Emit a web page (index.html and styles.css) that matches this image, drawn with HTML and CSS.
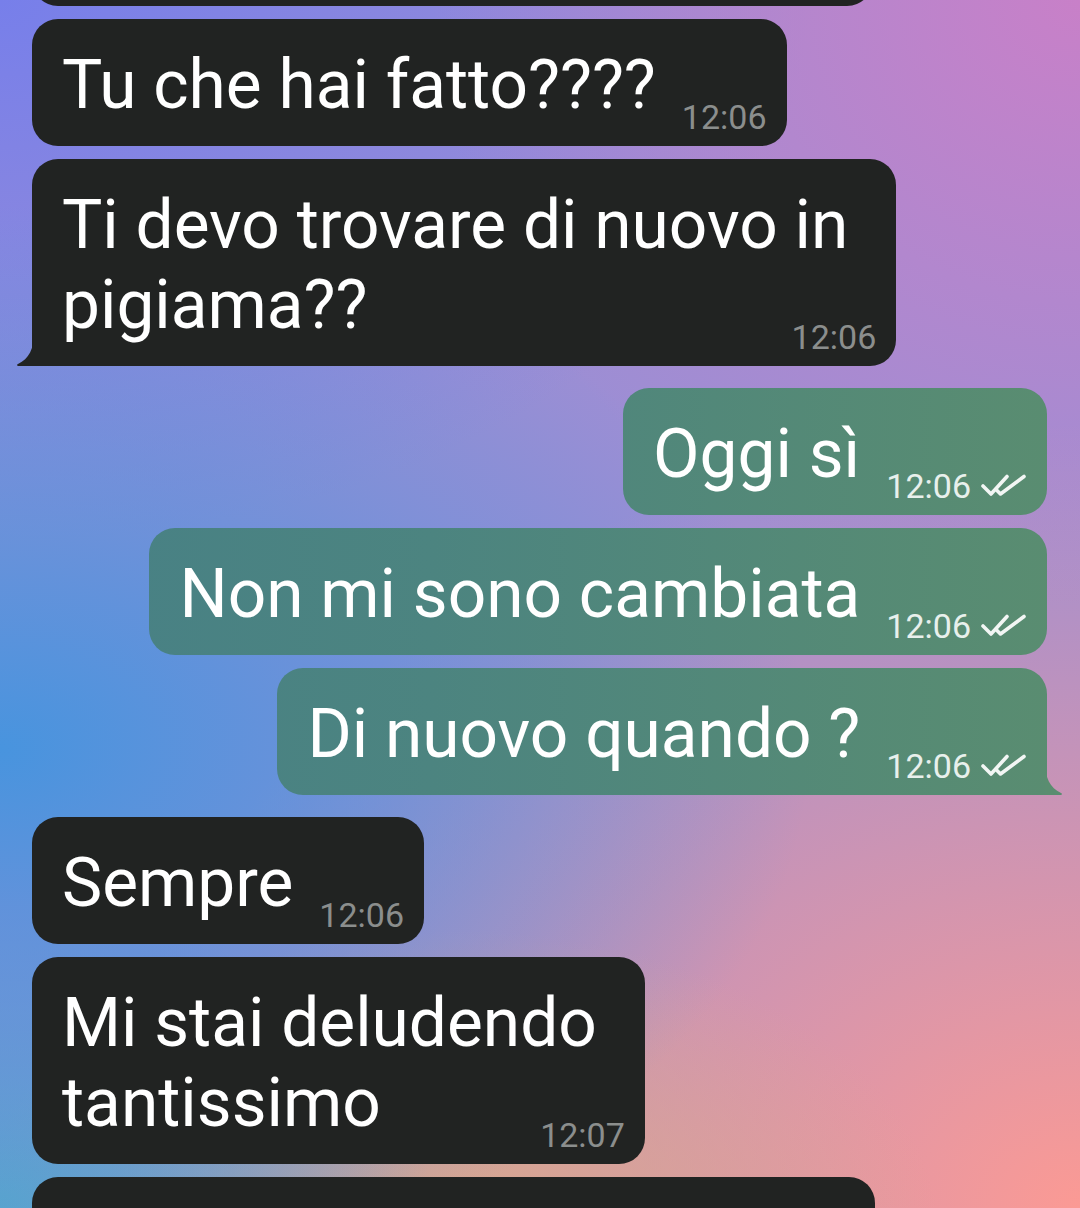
FILE: index.html
```html
<!DOCTYPE html>
<html lang="it">
<head>
  <meta charset="UTF-8">
  <meta name="viewport" content="width=device-width, initial-scale=1.0">
  <title>Chat</title>
  <link rel="stylesheet" href="styles.css">
</head>
<body>

  <div class="chat">

    <div class="row in">
      <div class="bubble">Sei ancora a letto?????<span class="meta">12:05</span></div>
    </div>

    <div class="row in">
      <div class="bubble">Tu che hai fatto????<span class="meta">12:06</span></div>
    </div>

    <div class="row in group-end">
      <div class="bubble wrap tail">Ti devo trovare di nuovo in<br>pigiama??<span class="meta">12:06</span>
        <svg class="tail-shape" width="18" height="32" viewBox="0 0 18 32"><path d="M18 0 C18 14 13 25 2 30 Q0 31 2 32 L18 32 Z"/></svg>
      </div>
    </div>

    <div class="row out">
      <div class="bubble">Oggi sì<span class="meta">12:06 <svg class="checks" width="46" height="24" viewBox="0 0 46 24"><path d="M2 12 L10 20 L26 2.5"/><path d="M16 16.5 L19.5 20 L43 2.5"/></svg></span></div>
    </div>

    <div class="row out">
      <div class="bubble">Non mi sono cambiata<span class="meta">12:06 <svg class="checks" width="46" height="24" viewBox="0 0 46 24"><path d="M2 12 L10 20 L26 2.5"/><path d="M16 16.5 L19.5 20 L43 2.5"/></svg></span></div>
    </div>

    <div class="row out group-end">
      <div class="bubble tail">Di nuovo quando ?<span class="meta">12:06 <svg class="checks" width="46" height="24" viewBox="0 0 46 24"><path d="M2 12 L10 20 L26 2.5"/><path d="M16 16.5 L19.5 20 L43 2.5"/></svg></span>
        <svg class="tail-shape" width="18" height="32" viewBox="0 0 18 32"><path d="M0 0 C0 14 5 25 16 30 Q18 31 16 32 L0 32 Z"/></svg>
      </div>
    </div>

    <div class="row in">
      <div class="bubble">Sempre<span class="meta">12:06</span></div>
    </div>

    <div class="row in">
      <div class="bubble wrap">Mi stai deludendo<br>tantissimo<span class="meta">12:07</span></div>
    </div>

    <div class="row in">
      <div class="bubble">Io non ti riconosco più!<span class="meta">12:07</span></div>
    </div>

  </div>

</body>
</html>
```

FILE: styles.css
```css
html, body {
  margin: 0;
  padding: 0;
  height: 1208px;
  overflow: hidden;
}

body {
  font-family: Roboto, "Noto Sans", sans-serif;
  color: #fff;
  background-color: #9c8ed4;
  background-image:
    radial-gradient(ellipse 75% 45% at 0% 62%, #4894de 0%, rgba(72, 148, 222, 0) 100%),
    radial-gradient(ellipse 40% 25% at 0% 100%, #5aa6cc 0%, rgba(90, 166, 204, 0) 100%),
    radial-gradient(ellipse 45% 25% at 42% 102%, #dcaa8a 0%, rgba(220, 170, 138, 0) 100%),
    radial-gradient(ellipse 90% 65% at 100% 100%, #fb9a94 0%, rgba(251, 154, 148, 0) 100%),
    radial-gradient(ellipse 60% 50% at 100% 0%, #c880c8 0%, rgba(200, 128, 200, 0) 100%),
    radial-gradient(ellipse 75% 45% at 0% 0%, #777fea 0%, rgba(119, 127, 234, 0) 100%);
}

.chat {
  display: flex;
  flex-direction: column;
  gap: 13px;
  margin-top: -121px;
  padding: 0 33px 0 32px;
}

.row {
  display: flex;
}

.row.in {
  justify-content: flex-start;
}

.row.out {
  justify-content: flex-end;
}

.row.group-end {
  margin-bottom: 9px;
}

.bubble {
  position: relative;
  max-width: 816px;
  padding: 26px 20px 11px 30px;
  border-radius: 26px;
  font-size: 67.6px;
  line-height: 80px;
  background: #212322;
}

/* wrapped messages keep some room on the right like the app does */
.bubble.wrap {
  padding-right: 48px;
}

.out .bubble {
  max-width: 900px;
  background: linear-gradient(to right, #478086 0%, #4c8480 40%, #5a8d70 100%);
  background-attachment: fixed;
}

.meta {
  float: right;
  margin: 54px 0 0 26px;
  font-size: 34px;
  line-height: 36px;
  color: #8b8e8d;
  display: flex;
  align-items: center;
  gap: 10px;
}

.wrap .meta {
  margin-right: -28px;
}

.out .meta {
  color: #e8f0ec;
}

.checks {
  fill: none;
  stroke: #f2f6f4;
  stroke-width: 3.6;
  stroke-linecap: round;
  stroke-linejoin: round;
}

.in .bubble.tail {
  border-bottom-left-radius: 0;
}

.out .bubble.tail {
  border-bottom-right-radius: 0;
}

.tail-shape {
  position: absolute;
  bottom: 0;
}

.in .tail-shape {
  left: -16px;
  fill: #212322;
}

.out .tail-shape {
  right: -16px;
  fill: #5a8d70;
}
```
